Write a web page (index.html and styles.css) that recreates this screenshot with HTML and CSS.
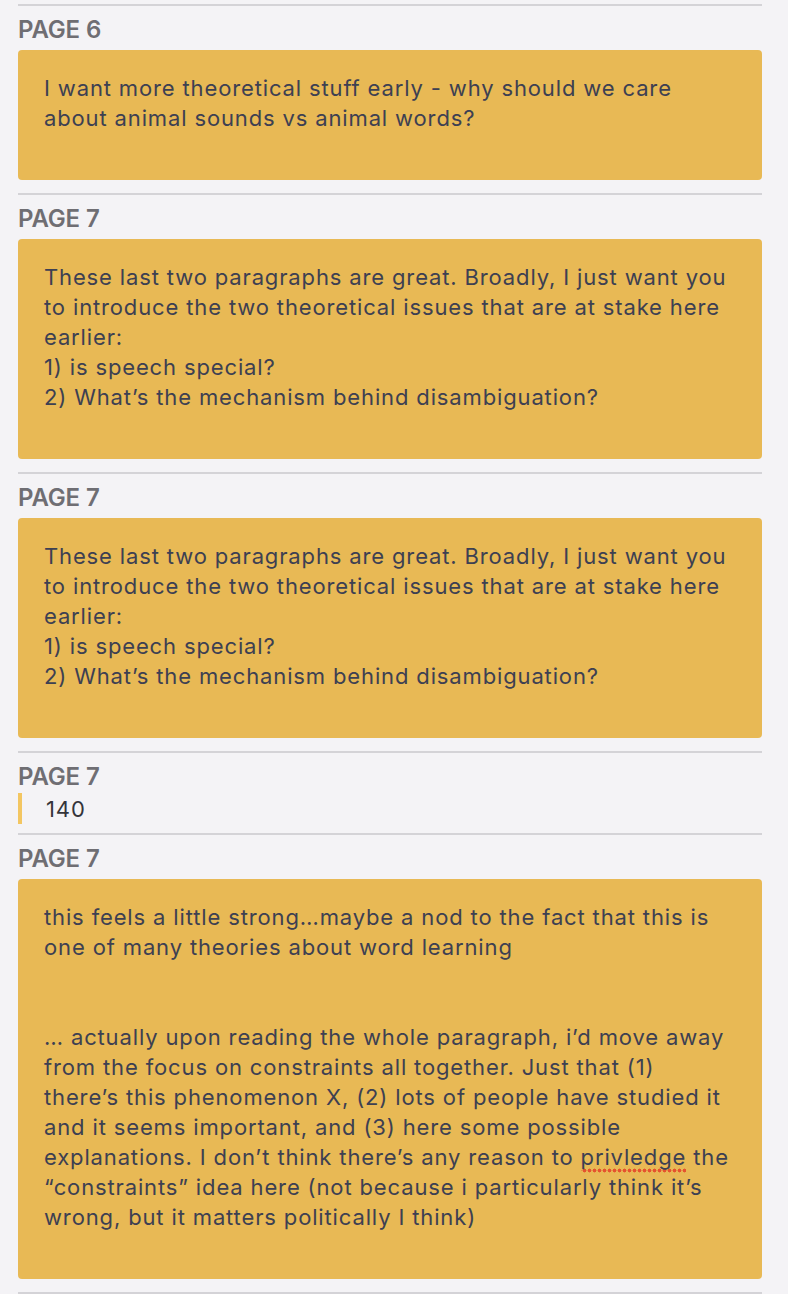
FILE: index.html
```html
<!DOCTYPE html>
<html lang="en">
<head>
<meta charset="utf-8">
<title>Comments</title>
<link rel="stylesheet" href="styles.css">
</head>
<body>
<div class="list">
  <section class="entry">
    <div class="page-label">PAGE 6</div>
    <div class="note">I want more theoretical stuff early - why should we care about animal sounds vs animal words?</div>
  </section>
  <section class="entry">
    <div class="page-label">PAGE 7</div>
    <div class="note">These last two paragraphs are great. Broadly, I just want you to introduce the two theoretical issues that are at stake here earlier:<br>1) is speech special?<br>2) What’s the mechanism behind disambiguation?</div>
  </section>
  <section class="entry">
    <div class="page-label">PAGE 7</div>
    <div class="note">These last two paragraphs are great. Broadly, I just want you to introduce the two theoretical issues that are at stake here earlier:<br>1) is speech special?<br>2) What’s the mechanism behind disambiguation?</div>
  </section>
  <section class="entry">
    <div class="page-label">PAGE 7</div>
    <div class="quote">140</div>
  </section>
  <section class="entry">
    <div class="page-label">PAGE 7</div>
    <div class="note">this feels a little strong…maybe a nod to the fact that this is one of many theories about word learning<br><br><br>… actually upon reading the whole paragraph, i’d move away from the focus on constraints all together. Just that (1) there’s this phenomenon X, (2) lots of people have studied it and it seems important, and (3) here some possible explanations. I don’t think there’s any reason to <span class="misspelled">privledge</span> the “constraints” idea here (not because i particularly think it’s wrong, but it matters politically I think)</div>
  </section>
  <div class="end-rule"></div>
</div>
</body>
</html>
```
FILE: styles.css
```css
html, body {
  margin: 0;
  padding: 0;
  background: #f4f3f6;
}
body {
  font-family: Inter, "Liberation Sans", sans-serif;
  color: #3d4052;
}
.list {
  padding: 4px 26px 0 18px;
}
.entry {
  border-top: 2px solid #d4d3d7;
  padding: 10px 0 13px 0;
}
.end-rule {
  border-top: 2px solid #d4d3d7;
}
.page-label {
  font-size: 24px;
  font-weight: 600;
  letter-spacing: -0.15px;
  color: #6f6e73;
  line-height: 28px;
  margin-bottom: 6px;
}
.note {
  background: #e8b955;
  border-radius: 4px;
  padding: 23px 26px 47px 26px;
  font-size: 22px;
  letter-spacing: 0.86px;
  line-height: 30px;
}
.quote {
  border-left: 4px solid #f3c662;
  padding: 1px 0 0 24px;
  margin: -4px 0 -4px 0;
  font-size: 22px;
  letter-spacing: 0.86px;
  line-height: 30px;
  color: #34343a;
}
.misspelled {
  padding-bottom: 3px;
  background-image: radial-gradient(circle, #e5532f 1.7px, rgba(229, 83, 47, 0) 2.2px);
  background-size: 5px 5px;
  background-repeat: repeat-x;
  background-position: 1px 100%;
}
```
